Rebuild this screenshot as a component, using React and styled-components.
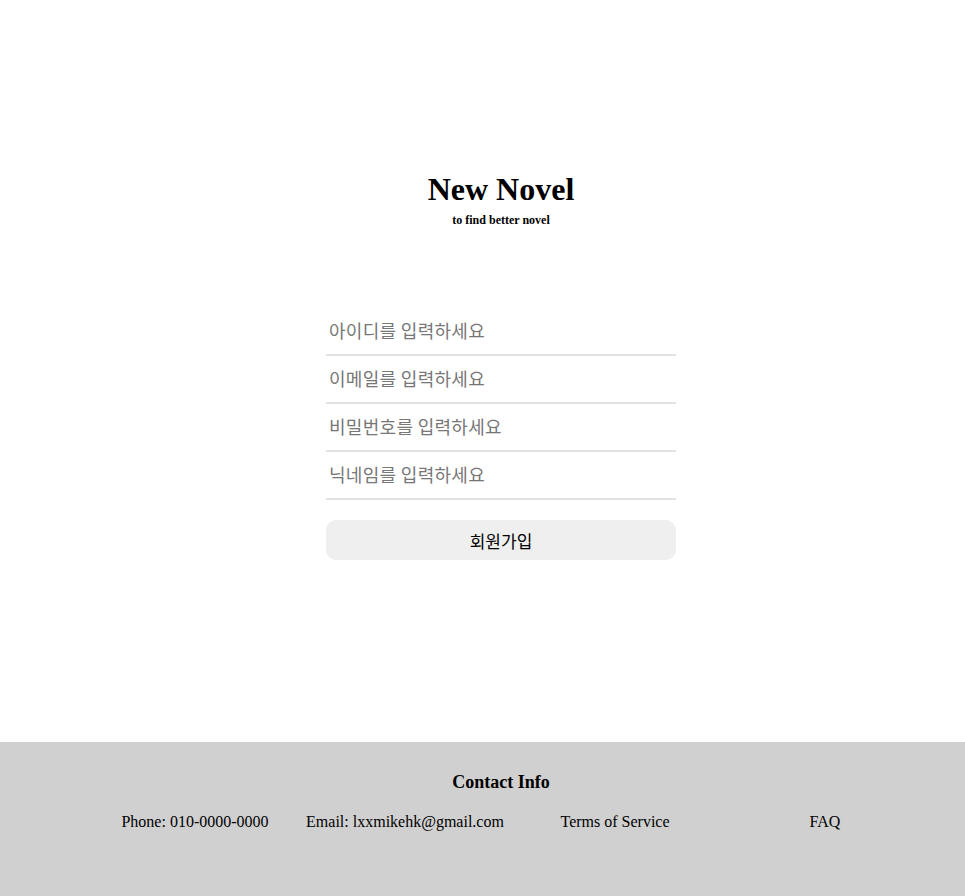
import React from "react";
import styled, { createGlobalStyle } from "styled-components";

const Global = createGlobalStyle`
  html, body { margin: 0; padding: 0; background: #fff; }
  body { font-family: "Liberation Serif", "Times New Roman", serif; }
`;

const Page = styled.div`
  display: flex;
  flex-direction: column;
  min-height: 896px;
`;

const Main = styled.main`
  height: 742px;
  box-sizing: border-box;
  padding: 171px 0 0 37px;
  display: flex;
  flex-direction: column;
  align-items: center;
`;

const Title = styled.h1`
  margin: 0;
  font-family: "Liberation Serif", serif;
  font-size: 32px;
  font-weight: bold;
  line-height: 37px;
  color: #000;
`;

const Subtitle = styled.p`
  margin: 5px 0 0;
  font-family: "Liberation Serif", serif;
  font-size: 12px;
  font-weight: bold;
  line-height: 14px;
`;

const Form = styled.form`
  margin-top: 81px;
  width: 350px;
  display: flex;
  flex-direction: column;
`;

const Input = styled.input`
  height: 48px;
  box-sizing: border-box;
  border: none;
  border-bottom: 2px solid #e2e2e2;
  padding: 0 3px 3px;
  font-family: "Noto Sans CJK KR", "Noto Sans", sans-serif;
  font-size: 18px;
  letter-spacing: 0.3px;
  outline: none;
  background: transparent;
  &::placeholder { color: #777; }
`;

const Button = styled.button`
  margin-top: 20px;
  height: 40px;
  border: none;
  border-radius: 10px;
  background: #efefef;
  color: #000;
  font-family: "Noto Sans CJK KR", "Noto Sans", sans-serif;
  font-size: 17px;
  cursor: pointer;
`;

const Footer = styled.footer`
  height: 154px;
  background: #d0d0d0;
  box-sizing: border-box;
  padding-top: 30px;
  display: flex;
  flex-direction: column;
  align-items: center;
`;

const FooterTitle = styled.h3`
  margin: 0 0 0 37px;
  font-size: 18px;
  font-weight: bold;
  line-height: 20px;
`;

const FooterRow = styled.div`
  margin: 20px 0 0 55px;
  display: grid;
  grid-template-columns: repeat(4, 210px);
  font-size: 16px;
  line-height: 20px;
`;

const FooterItem = styled.span`
  text-align: center;
`;

export default function App() {
  return (
    <Page>
      <Global />
      <Main>
        <Title>New Novel</Title>
        <Subtitle>to find better novel</Subtitle>
        <Form onSubmit={(e) => e.preventDefault()}>
          <Input placeholder="아이디를 입력하세요" />
          <Input placeholder="이메일를 입력하세요" />
          <Input type="password" placeholder="비밀번호를 입력하세요" />
          <Input placeholder="닉네임를 입력하세요" />
          <Button type="submit">회원가입</Button>
        </Form>
      </Main>
      <Footer>
        <FooterTitle>Contact Info</FooterTitle>
        <FooterRow>
          <FooterItem>Phone: 010-0000-0000</FooterItem>
          <FooterItem>Email: lxxmikehk@gmail.com</FooterItem>
          <FooterItem>Terms of Service</FooterItem>
          <FooterItem>FAQ</FooterItem>
        </FooterRow>
      </Footer>
    </Page>
  );
}
